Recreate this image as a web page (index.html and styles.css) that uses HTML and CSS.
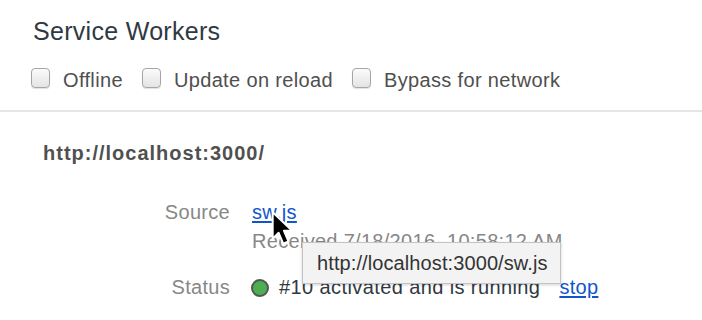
FILE: index.html
```html
<!DOCTYPE html>
<html lang="en">
<head>
<meta charset="utf-8">
<title>Service Workers</title>
<link rel="stylesheet" href="styles.css">
</head>
<body>
<div class="panel">
  <header class="head">
    <h1 class="title">Service Workers</h1>
    <div class="toggles">
      <label class="toggle"><input type="checkbox" class="box"><span>Offline</span></label>
      <label class="toggle"><input type="checkbox" class="box"><span>Update on reload</span></label>
      <label class="toggle"><input type="checkbox" class="box"><span>Bypass for network</span></label>
    </div>
  </header>
  <section class="worker">
    <div class="origin">http://localhost:3000/</div>
    <div class="fields">
      <div class="label">Source</div>
      <div class="value">
        <a class="link" href="#">sw.js</a>
        <div class="muted">Received 7/18/2016, 10:58:12 AM</div>
      </div>
      <div class="label status-label">Status</div>
      <div class="value status">
        <span class="dot"></span>
        <span class="status-text">#10 activated and is running</span>
        <a class="link stop" href="#">stop</a>
      </div>
    </div>
    <div class="tooltip">http://localhost:3000/sw.js</div>
    <svg class="cursor" width="26" height="38" viewBox="0 0 24 34" aria-hidden="true">
      <path d="M2.5 1.5 L2.5 26 L8 20.5 L12.2 30.5 L17 28.4 L12.8 18.6 L20.5 18.6 Z" fill="#000" stroke="#fff" stroke-width="1.8" stroke-linejoin="round"/>
    </svg>
  </section>
</div>
</body>
</html>
```
FILE: styles.css
```css
* { box-sizing: border-box; }
html, body { margin: 0; padding: 0; background: #fff; }
body {
  font-family: "Liberation Sans", Arial, sans-serif;
  font-size: 20px;
  color: #303942;
  width: 702px;
  height: 320px;
  overflow: hidden;
}
.panel { position: relative; }
.head {
  padding: 16px 0 0 33px;
  border-bottom: 2px solid #e6e6e6;
  height: 112px;
}
.title {
  margin: 0;
  font-size: 25px;
  font-weight: normal;
  line-height: 30px;
  letter-spacing: 0.3px;
  color: #303942;
}
.toggles {
  display: flex;
  align-items: center;
  margin-top: 22px;
  margin-left: -2px;
  height: 20px;
}
.toggle {
  display: flex;
  align-items: center;
  margin-right: 19px;
  color: #4f4f4f;
  letter-spacing: 0.35px;
  line-height: 20px;
}
.toggle span { position: relative; top: 2px; }
.box {
  -webkit-appearance: none;
  appearance: none;
  margin: 0 13px 0 0;
  width: 19px;
  height: 20px;
  border: 1px solid #a6a6a6;
  border-radius: 4px;
  background: linear-gradient(#fbfbfb, #e4e4e4);
  box-shadow: 0 1px 1px rgba(0,0,0,0.12);
}
.worker { position: relative; padding: 29px 0 0 43px; }
.origin {
  font-weight: bold;
  line-height: 24px;
  letter-spacing: 1px;
  color: #505050;
}
.fields {
  display: grid;
  grid-template-columns: 187px 1fr;
  column-gap: 22px;
  row-gap: 17px;
  margin-top: 33px;
  line-height: 29px;
  letter-spacing: 0.3px;
}
.label { text-align: right; color: #878787; }
.value { color: #303942; }
.link { color: #1155cc; text-decoration: underline; text-underline-offset: 2px; }
.muted { color: #878787; }
.status { display: flex; align-items: center; }
.status-text { letter-spacing: 0.4px; }
.dot {
  width: 18px;
  height: 18px;
  border-radius: 50%;
  background: #4caf50;
  border: 2px solid #555;
  margin: 0 10px 0 -1px;
}
.stop { margin-left: 19px; }
.tooltip {
  position: absolute;
  left: 302px;
  top: 130px;
  width: 259px;
  height: 42px;
  padding: 0 0 0 14px;
  line-height: 40px;
  background: #f3f3f3;
  border: 1px solid #c4c4c4;
  box-shadow: 0 1px 3px rgba(0,0,0,0.18);
  color: #333;
  letter-spacing: 0.1px;
}
.cursor {
  position: absolute;
  left: 270px;
  top: 98px;
}
```
